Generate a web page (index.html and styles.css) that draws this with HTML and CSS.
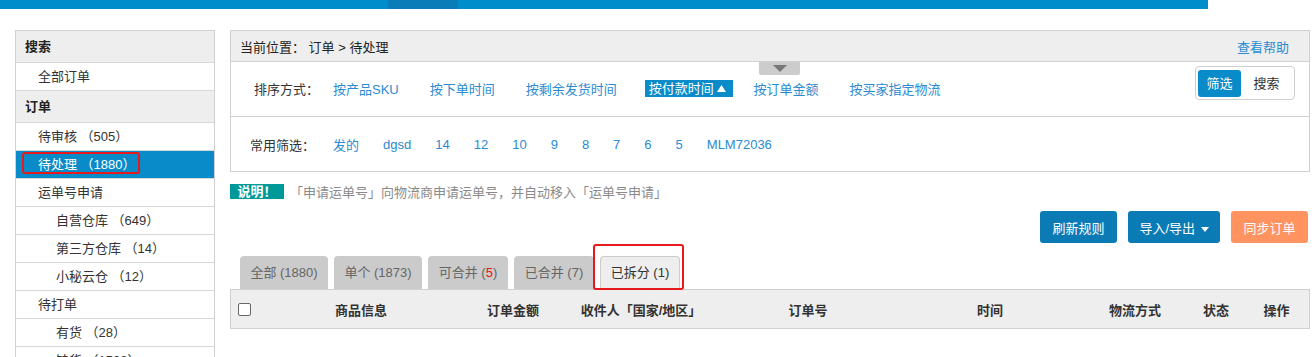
FILE: index.html
```html
<!DOCTYPE html>
<html lang="zh">
<head>
<meta charset="utf-8">
<title>订单 - 待处理</title>
<link rel="stylesheet" href="styles.css">
</head>
<body>
<div class="topbar"></div>
<div class="layout">
  <aside class="sidebar">
    <div class="side-head">搜索</div>
    <div class="side-item">全部订单</div>
    <div class="side-head">订单</div>
    <div class="side-item">待审核 （505）</div>
    <div class="side-item active">待处理 （1880）<span class="mark mark-side"></span></div>
    <div class="side-item">运单号申请</div>
    <div class="side-item sub">自营仓库 （649）</div>
    <div class="side-item sub">第三方仓库 （14）</div>
    <div class="side-item sub">小秘云仓 （12）</div>
    <div class="side-item">待打单</div>
    <div class="side-item sub">有货 （28）</div>
    <div class="side-item sub">缺货 （1533）</div>
  </aside>
  <main class="main">
    <div class="crumb">
      <span>当前位置： 订单 &gt; 待处理</span>
      <a class="link">查看帮助</a>
    </div>
    <div class="panel sort-panel">
      <span class="handle"><svg width="14" height="7" viewBox="0 0 14 7"><path d="M0 0H14L7 7Z" fill="#777"/></svg></span>
      <span class="label">排序方式：</span>
      <a class="link opt">按产品SKU</a>
      <a class="link opt">按下单时间</a>
      <a class="link opt">按剩余发货时间</a>
      <a class="opt on">按付款时间 <svg width="9" height="7" viewBox="0 0 9 7"><path d="M0 7L4.5 0L9 7Z" fill="#fff"/></svg></a>
      <a class="link opt">按订单金额</a>
      <a class="link opt">按买家指定物流</a>
      <div class="toggle"><span class="tg on">筛选</span><span class="tg">搜索</span></div>
    </div>
    <div class="panel filter-panel">
      <span class="label">常用筛选：</span>
      <a class="link f">发的</a>
      <a class="link f">dgsd</a>
      <a class="link f">14</a>
      <a class="link f">12</a>
      <a class="link f">10</a>
      <a class="link f">9</a>
      <a class="link f">8</a>
      <a class="link f">7</a>
      <a class="link f">6</a>
      <a class="link f">5</a>
      <a class="link f">MLM72036</a>
    </div>
    <div class="notice"><span class="badge">说明！</span><span class="ntext">「申请运单号」向物流商申请运单号，并自动移入「运单号申请」</span></div>
    <div class="actions">
      <button class="btn blue w77">刷新规则</button>
      <button class="btn blue w92">导入/导出 <svg width="8" height="5" viewBox="0 0 8 5"><path d="M0 0H8L4 5Z" fill="#fff"/></svg></button>
      <button class="btn orange w77">同步订单</button>
    </div>
    <div class="tabs">
      <span class="tab w88">全部 (1880)</span>
      <span class="tab w88">单个 (1873)</span>
      <span class="tab w80">可合并 (<em>5</em>)</span>
      <span class="tab w80">已合并 (7)</span>
      <span class="tab w80 active">已拆分 (1)<span class="mark mark-tab"></span></span>
    </div>
    <div class="thead">
      <span class="cell chk"><span class="box"></span></span>
      <span class="cell">商品信息</span>
      <span class="cell">订单金额</span>
      <span class="cell">收件人「国家/地区」</span>
      <span class="cell">订单号</span>
      <span class="cell">时间</span>
      <span class="cell">物流方式</span>
      <span class="cell">状态</span>
      <span class="cell">操作</span>
    </div>
  </main>
</div>
</body>
</html>
```

FILE: styles.css
```css
* { box-sizing: border-box; }
html, body { margin: 0; padding: 0; background: #fff; }
body {
  font-family: "Liberation Sans", Arial, "Noto Sans CJK SC", sans-serif;
  font-size: 13px;
  color: #333;
  width: 1312px;
  height: 357px;
  overflow: hidden;
}
.topbar {
  width: 1208px;
  height: 9px;
  background: linear-gradient(to right, #008dcc 0, #008dcc 388px, #0a7db8 388px, #0a7db8 458px, #008dcc 458px);
}
.layout {
  display: flex;
  align-items: flex-start;
  padding: 21px 0 0 15px;
  gap: 15px;
}
.sidebar {
  width: 200px;
  flex: none;
  border: 1px solid #d0d0d0;
  border-bottom: none;
}
.side-head {
  height: 32px;
  line-height: 31px;
  padding-left: 9px;
  font-weight: bold;
  background: #eeeeee;
  border-bottom: 1px solid #d8d8d8;
  color: #222;
}
.side-item {
  position: relative;
  height: 28px;
  line-height: 27px;
  padding-left: 22px;
  border-bottom: 1px solid #d8d8d8;
  color: #333;
}
.side-item.sub { padding-left: 40px; }
.side-item.active { background: #0a8bc9; color: #fff; }
.mark {
  position: absolute;
  border: 2px solid #e8191c;
  border-radius: 3px;
}
.mark-side { left: 6px; top: 1px; width: 118px; height: 22px; }

.main { width: 1080px; flex: none; }
.link { color: #2a8bd1; text-decoration: none; }
.crumb {
  height: 32px;
  display: flex;
  align-items: center;
  justify-content: space-between;
  padding: 0 20px 0 9px;
  background: #eeeeee;
  border: 1px solid #d0d0d0;
  color: #222;
}
.panel {
  position: relative;
  display: flex;
  align-items: center;
  border: 1px solid #d0d0d0;
  border-top: none;
}
.sort-panel { height: 55px; padding-left: 23px; padding-bottom: 1px; }
.filter-panel { height: 55px; padding-left: 19px; }
.label { color: #333; }
.sort-panel .label { margin-right: 14px; }
.opt { margin-right: 31px; white-space: nowrap; }
.opt:nth-of-type(3) { margin-right: 32px; }
.opt.on {
  background: #0a8bc9;
  color: #fff;
  padding: 1px 7px 1px 4px;
  margin: 0 20px 0 -4px;
  line-height: 15px;
}
.opt.on svg { vertical-align: 1px; }
.handle {
  position: absolute;
  left: 528px;
  top: 0;
  width: 41px;
  height: 13px;
  background: #cccccc;
  display: flex;
  justify-content: center;
  align-items: center;
  border-radius: 0 0 2px 2px;
}
.toggle {
  margin-left: auto;
  margin-right: 14px;
  align-self: flex-start;
  margin-top: 4px;
  width: 100px;
  height: 34px;
  border: 1px solid #cfcfcf;
  border-radius: 4px;
  display: flex;
  align-items: center;
  padding: 0 2px;
}
.tg { flex: 1; height: 27px; line-height: 27px; text-align: center; color: #333; border-radius: 3px; }
.tg.on { flex: none; width: 43px; background: #0a8bc9; color: #fff; }
.filter-panel .label { margin-right: 18px; }
.f { margin-right: 24px; }

.notice {
  display: flex;
  align-items: center;
  margin-top: 12px;
  height: 15px;
}
.badge {
  background: #009999;
  color: #fff;
  font-weight: bold;
  width: 54px;
  height: 15px;
  line-height: 15px;
  text-align: center;
  margin-right: 6px;
}
.ntext { color: #8a8a8a; }

.actions {
  display: flex;
  justify-content: flex-end;
  gap: 11px;
  margin-top: 12px;
  padding-right: 2px;
}
.btn {
  font: inherit;
  height: 32px;
  border: none;
  border-radius: 3px;
  color: #fff;
  padding: 0;
  text-align: center;
}
.w77 { width: 77px; }
.w92 { width: 92px; }
.btn svg { vertical-align: 1px; margin-left: 2px; }
.btn.blue { background: #0b7bb6; }
.btn.orange { background: #ff9460; }

.tabs {
  display: flex;
  gap: 6px;
  margin-top: 12px;
  padding-left: 10px;
  height: 34px;
  align-items: flex-end;
}
.tab {
  position: relative;
  height: 33px;
  line-height: 33px;
  padding: 0;
  text-align: center;
  background: #cbcbcb;
  color: #666;
  border-radius: 4px 4px 0 0;
  white-space: nowrap;
}
.w88 { width: 88px; }
.w80 { width: 80px; }
.tab em { font-style: normal; color: #ee1111; }
.tab.active {
  background: #eeeeee;
  color: #333;
  border: 1px solid #cccccc;
  border-bottom: none;
  line-height: 32px;
}
.mark-tab { left: -8px; top: -13px; width: 91px; height: 46px; }

.thead {
  display: grid;
  grid-template-columns: 29px 202px 102px 154px 180px 184px 106px 56px 1fr;
  height: 40px;
  align-items: center;
  background: #eeeeee;
  border: 1px solid #d0d0d0;
  font-weight: bold;
  color: #333;
}
.cell { text-align: center; white-space: nowrap; }
.cell.chk { text-align: left; padding-left: 7px; display: flex; }
.box {
  width: 13px;
  height: 13px;
  border: 1px solid #666;
  border-radius: 2px;
  background: #fff;
  margin-top: 1px;
}
```
